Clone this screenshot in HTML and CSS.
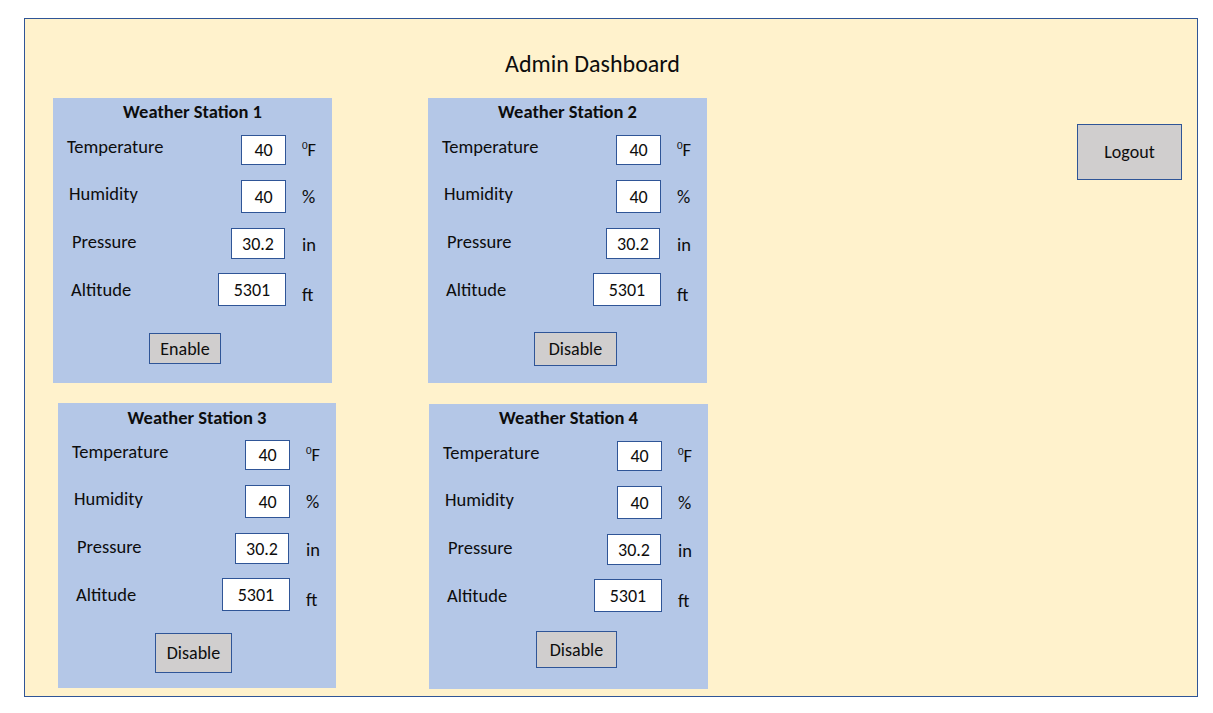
FILE: index.html
```html
<!DOCTYPE html>
<html lang="en">
<head>
<meta charset="utf-8">
<title>Admin Dashboard</title>
<link rel="stylesheet" href="styles.css">
</head>
<body>
<div class="frame">
  <h1 class="page-title">Admin Dashboard</h1>
  <div class="main">
    <div class="stations">
      <section class="station">
        <h2 class="station-title">Weather Station 1</h2>
        <div class="rows">
          <div class="row row-temp"><span class="label">Temperature</span><span class="field">40</span><span class="unit"><sup>0</sup>F</span></div>
          <div class="row row-hum"><span class="label">Humidity</span><span class="field">40</span><span class="unit">%</span></div>
          <div class="row row-pres"><span class="label">Pressure</span><span class="field">30.2</span><span class="unit">in</span></div>
          <div class="row row-alt"><span class="label">Altitude</span><span class="field">5301</span><span class="unit">ft</span></div>
        </div>
        <button class="btn btn-s1">Enable</button>
      </section>
      <section class="station">
        <h2 class="station-title">Weather Station 2</h2>
        <div class="rows">
          <div class="row row-temp"><span class="label">Temperature</span><span class="field">40</span><span class="unit"><sup>0</sup>F</span></div>
          <div class="row row-hum"><span class="label">Humidity</span><span class="field">40</span><span class="unit">%</span></div>
          <div class="row row-pres"><span class="label">Pressure</span><span class="field">30.2</span><span class="unit">in</span></div>
          <div class="row row-alt"><span class="label">Altitude</span><span class="field">5301</span><span class="unit">ft</span></div>
        </div>
        <button class="btn btn-s2">Disable</button>
      </section>
      <section class="station station-3">
        <h2 class="station-title">Weather Station 3</h2>
        <div class="rows">
          <div class="row row-temp"><span class="label">Temperature</span><span class="field">40</span><span class="unit"><sup>0</sup>F</span></div>
          <div class="row row-hum"><span class="label">Humidity</span><span class="field">40</span><span class="unit">%</span></div>
          <div class="row row-pres"><span class="label">Pressure</span><span class="field">30.2</span><span class="unit">in</span></div>
          <div class="row row-alt"><span class="label">Altitude</span><span class="field">5301</span><span class="unit">ft</span></div>
        </div>
        <button class="btn btn-s3">Disable</button>
      </section>
      <section class="station station-4">
        <h2 class="station-title">Weather Station 4</h2>
        <div class="rows">
          <div class="row row-temp"><span class="label">Temperature</span><span class="field">40</span><span class="unit"><sup>0</sup>F</span></div>
          <div class="row row-hum"><span class="label">Humidity</span><span class="field">40</span><span class="unit">%</span></div>
          <div class="row row-pres"><span class="label">Pressure</span><span class="field">30.2</span><span class="unit">in</span></div>
          <div class="row row-alt"><span class="label">Altitude</span><span class="field">5301</span><span class="unit">ft</span></div>
        </div>
        <button class="btn btn-s4">Disable</button>
      </section>
    </div>
    <button class="btn btn-logout">Logout</button>
  </div>
</div>
</body>
</html>
```

FILE: styles.css
```css
* { box-sizing: border-box; }
html, body { margin: 0; background: #ffffff; }
body {
  font-family: Carlito, Lato, "Open Sans", sans-serif;
  color: #0d0d0d;
  font-size: 18px;
}
.frame {
  margin: 18px 0 0 24px;
  width: 1174px;
  height: 679px;
  background: #fff2cc;
  border: 1px solid #2f5597;
}
.page-title {
  margin: 0;
  padding: 30px 37px 0 0;
  height: 60px;
  font-size: 24px;
  font-weight: 400;
  line-height: 30px;
  text-align: center;
}
.main {
  display: flex;
  align-items: flex-start;
  margin-top: 19px;
  padding: 0 15px 0 28px;
}
.stations {
  display: grid;
  grid-template-columns: 279px 279px;
  column-gap: 96px;
  row-gap: 20px;
  align-items: start;
}
.station {
  width: 279px;
  height: 285px;
  background: #b4c7e7;
  padding-top: 3px;
  display: flex;
  flex-direction: column;
}
.station-3 { margin-left: 5px; width: 278px; padding-top: 4px; }
.station-3 .rows { margin-top: 11px; }
.station-4 { margin-left: 1px; margin-top: 1px; }
.station-title {
  margin: 0;
  font-size: 18.5px;
  font-weight: 700;
  line-height: 22px;
  text-align: center;
}
.rows {
  margin-top: 12px;
  display: flex;
  flex-direction: column;
  gap: 15px;
}
.row {
  display: flex;
  align-items: center;
}
.label {
  flex: 1;
  font-size: 18.5px;
  line-height: 22px;
}
.field {
  display: flex;
  align-items: center;
  justify-content: center;
  background: #ffffff;
  border: 1px solid #2f5597;
  line-height: 22px;
}
.unit {
  width: 46px;
  padding-left: 16px;
  font-size: 18.5px;
  line-height: 22px;
}
.unit sup {
  font-size: 11px;
  vertical-align: 7px;
  line-height: 0;
}
.row-temp .label { padding-left: 14px; margin-bottom: 6px; }
.row-temp .field { width: 45px; height: 30px; }
.row-hum .label { padding-left: 16px; margin-bottom: 6px; }
.row-hum .field { width: 45px; height: 33px; }
.row-pres .label { padding-left: 19px; margin-bottom: 3px; }
.row-pres .field { width: 54px; height: 31px; margin-right: 1px; }
.row-pres .unit { margin-top: 3px; }
.row-alt { margin-top: -1px; }
.row-alt .label { padding-left: 18px; }
.row-alt .field { width: 68px; height: 33px; }
.row-alt .unit { margin-top: 10px; }
.btn {
  font-family: inherit;
  font-size: 18px;
  color: #0d0d0d;
  background: #d0cece;
  border: 1px solid #2f5597;
  padding: 0;
  align-self: flex-start;
}
.btn-s1 { margin: 27px 0 0 96px; width: 72px; height: 31px; }
.btn-s2 { margin: 26px 0 0 106px; width: 83px; height: 34px; }
.btn-s3 { margin: 22px 0 0 97px; width: 77px; height: 40px; }
.btn-s4 { margin: 19px 0 0 107px; width: 81px; height: 37px; }
.btn-logout {
  margin: 26px 0 0 auto;
  width: 105px;
  height: 56px;
}
```
